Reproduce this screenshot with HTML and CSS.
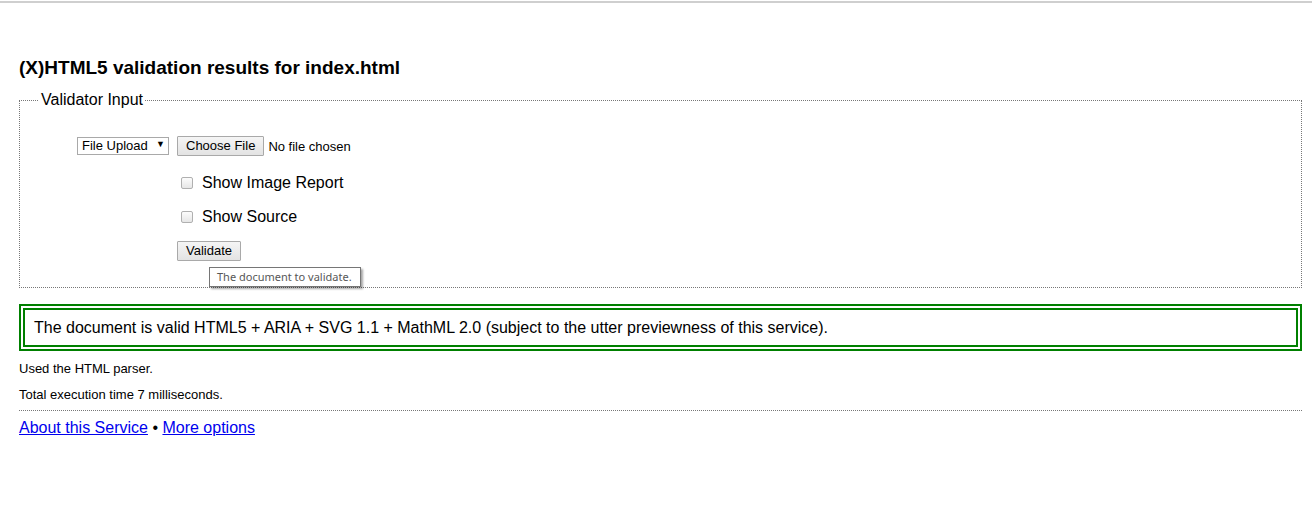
FILE: index.html
```html
<!DOCTYPE html>
<html>
<head>
<meta charset="utf-8">
<title>Validation results</title>
<link rel="stylesheet" href="styles.css">
</head>
<body>
<div class="topline"></div>
<main class="page">
  <h2 class="title">(X)HTML5 validation results for index.html</h2>
  <fieldset class="input-box">
    <legend>Validator Input</legend>
    <div class="form-grid">
      <div class="select-wrap"><select class="mode"><option>File Upload</option></select></div>
      <div class="file-row"><button class="btn">Choose File</button><span class="nofile">No file chosen</span></div>
      <div></div>
      <label class="check"><span class="box"></span>Show Image Report</label>
      <div></div>
      <label class="check"><span class="box"></span>Show Source</label>
      <div></div>
      <div class="submit-row"><button class="btn">Validate</button><span class="tooltip">The document to validate.</span></div>
    </div>
  </fieldset>
  <p class="success">The document is valid HTML5 + ARIA + SVG 1.1 + MathML 2.0 (subject to the utter previewness of this service).</p>
  <p class="info">Used the HTML parser.</p>
  <p class="info">Total execution time 7 milliseconds.</p>
  <hr class="sep">
  <p class="links"><a href="#">About this Service</a> • <a href="#">More options</a></p>
</main>
</body>
</html>
```
FILE: styles.css
```css
html, body {
  margin: 0;
  padding: 0;
  background: #fff;
  color: #000;
  font-family: "Liberation Sans", Arial, sans-serif;
}
.topline {
  height: 2px;
  margin-top: 1px;
  background: #cfcfcf;
}
.page {
  padding: 0 10px 0 19px;
}
.title {
  font-size: 19px;
  font-weight: bold;
  margin: 0;
  padding-top: 53px;
  line-height: 24px;
}
.input-box {
  margin: 11px 0 0 0;
  border: 1px dotted #777;
  padding: 27px 10px 0 19px;
  height: 168px;
}
.input-box legend {
  font-size: 16px;
  padding: 0 2px;
  line-height: 18px;
}
.form-grid {
  display: grid;
  grid-template-columns: 130px 1fr;
  column-gap: 8px;
  row-gap: 0;
  margin-left: 0;
}
.select-wrap {
  justify-self: end;
  position: relative;
  height: 18px;
}
.select-wrap::after {
  content: "▼";
  position: absolute;
  right: 4px;
  top: 3px;
  font-size: 9px;
  pointer-events: none;
}
.mode {
  appearance: none;
  -webkit-appearance: none;
  font-family: "Liberation Sans", Arial, sans-serif;
  font-size: 13px;
  width: 92px;
  height: 18px;
  padding: 0 0 0 4px;
  border: 1px solid #a9a9a9;
  border-radius: 0;
  background: #fff;
  color: #000;
  line-height: 16px;
}
.file-row {
  display: flex;
  align-items: center;
  height: 20px;
  margin-top: 0;
}
.btn {
  font-family: "Liberation Sans", Arial, sans-serif;
  font-size: 13px;
  height: 20px;
  padding: 0 8px;
  border: 1px solid #a9a9a9;
  border-radius: 1px;
  background: linear-gradient(#f5f5f5, #e3e3e3);
  color: #000;
  line-height: 18px;
}
.nofile {
  font-size: 13px;
  margin-left: 4px;
}
.check {
  display: flex;
  align-items: center;
  font-size: 16px;
  height: 18px;
  margin-top: 18px;
}
.check + div + .check {
  margin-top: 16px;
}
.box {
  width: 12px;
  height: 12px;
  border: 1px solid #b0b0b0;
  border-radius: 2px;
  background: linear-gradient(#fcfcfc, #e6e6e6);
  margin: 0 9px 0 4px;
  box-sizing: border-box;
}
.submit-row {
  position: relative;
  margin-top: 15px;
  height: 20px;
}
.tooltip {
  position: absolute;
  left: 32px;
  top: 26px;
  white-space: nowrap;
  font-family: "Noto Sans", sans-serif;
  font-size: 11px;
  line-height: 18px;
  color: #575757;
  background: #fff;
  border: 1px solid #767676;
  padding: 0 8px 0 7px;
  box-shadow: 2px 2px 2px rgba(0,0,0,0.35);
}
.success {
  margin: 16px 0 0 0;
  border: 6px double green;
  padding: 8px 9px 7px;
  font-size: 16px;
  line-height: 20px;
}
.info {
  font-size: 13px;
  line-height: 16px;
  margin: 10px 0 0 0;
}
.info + .info {
  margin-top: 10px;
}
.sep {
  border: 0;
  border-top: 1px dotted #777;
  margin: 7px 0 0 0;
  height: 0;
}
.links {
  font-size: 16px;
  line-height: 20px;
  margin: 7px 0 0 0;
}
.links a {
  color: #0000ee;
}
```
